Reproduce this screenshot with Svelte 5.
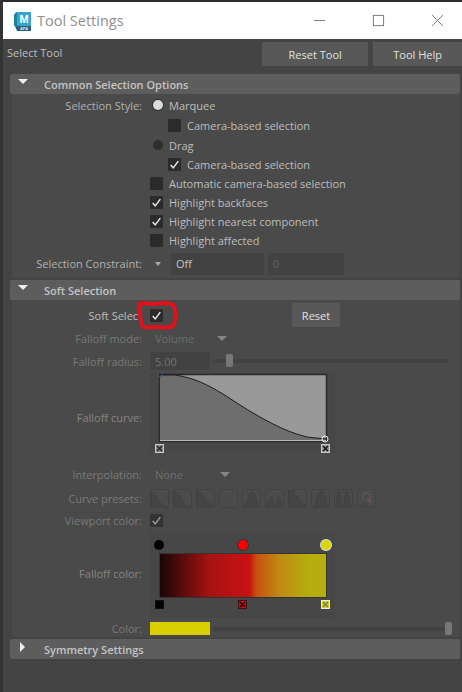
<script>
    const presets = [
        'M1 2 C6 2 8 17 18 18 L18 19 L1 19 Z',
        'M1 2 C10 2 7 18 18 18 L18 19 L1 19 Z',
        'M1 1 L18 18 L18 19 L1 19 Z',
        '',
        'M1 18 C5 18 6 3 10 3 C14 3 15 18 18 18 L18 19 L1 19 Z',
        'M1 18 C3 18 4 8 6 8 C8 8 8 18 10 18 C11 18 12 8 14 8 C16 8 16 18 18 18 L18 19 L1 19 Z',
        'M1 2 L6 2 L6 7 L10 7 L10 11 L13 11 L13 15 L18 15 L18 19 L1 19 Z',
        'M2 19 C5 18 6 2 10 2 C14 2 15 18 18 19 Z',
        'M1 19 C3 18 3 2 5 2 C7 2 7 18 9 18 C11 18 11 2 13 2 C15 2 15 18 18 19 Z',
    ];

    const options = [
        { label: 'Automatic camera-based selection', checked: false },
        { label: 'Highlight backfaces', checked: true },
        { label: 'Highlight nearest component', checked: true },
        { label: 'Highlight affected', checked: false },
    ];
</script>

{#snippet tick()}
    <svg class="tick" viewBox="0 0 13 13"><path d="M2 7 L5 10.5 L11 2.5" /></svg>
{/snippet}

{#snippet check(on)}
    <span class="check">{#if on}{@render tick()}{/if}</span>
{/snippet}

{#snippet handle(bg, border, mark)}
    <svg class="handle" viewBox="0 0 9 9">
        <rect x="0.5" y="0.5" width="8" height="8" fill={bg} stroke={border} />
        {#if mark}<path d="M2 2 L7 7 M7 2 L2 7" stroke={mark} stroke-width="1.5" />{/if}
    </svg>
{/snippet}

<div class="window">
    <header class="titlebar">
        <svg class="logo" viewBox="0 0 20 20">
            <path d="M2 4 L4 1 L19 1 L19 15 L2 15 Z" fill="#37a5cc" />
            <path d="M2 4 L5 1 L5 15 L2 15 Z" fill="#1f7fa8" />
            <path d="M3 15 L19 15 L19 20 L5 20 Z" fill="#2b5f7e" />
            <text x="12" y="12" class="logo-m">M</text>
            <text x="12" y="19" class="logo-sub">APA</text>
        </svg>
        <span class="title">Tool Settings</span>
        <div class="controls">
            <svg viewBox="0 0 14 14"><path d="M1 7 H13" /></svg>
            <svg viewBox="0 0 14 14"><rect x="1.5" y="1.5" width="11" height="11" /></svg>
            <svg viewBox="0 0 14 14"><path d="M1 1 L13 13 M13 1 L1 13" /></svg>
        </div>
    </header>

    <div class="toolbar">
        <span class="tool-name">Select Tool</span>
        <button class="btn wide">Reset Tool</button>
        <button class="btn help">Tool Help</button>
    </div>

    <section>
        <h2><span class="arrow down"></span>Common Selection Options</h2>
        <div class="body common">
            <div class="row spaced">
                <label>Selection Style:</label>
                <span class="radio on"></span><span class="text">Marquee</span>
            </div>
            <div class="row spaced">
                <label></label>
                <span class="indent"></span>{@render check(false)}<span class="text">Camera-based selection</span>
            </div>
            <div class="row">
                <label></label>
                <span class="radio"></span><span class="text">Drag</span>
            </div>
            <div class="row">
                <label></label>
                <span class="indent"></span>{@render check(true)}<span class="text">Camera-based selection</span>
            </div>
            {#each options as opt}
                <div class="row">
                    <label></label>
                    {@render check(opt.checked)}<span class="text">{opt.label}</span>
                </div>
            {/each}
            <div class="row constraint">
                <label>Selection Constraint:</label>
                <span class="mini-arrow"></span>
                <span class="field off">Off</span>
                <span class="field zero">0</span>
            </div>
        </div>
    </section>

    <section>
        <h2><span class="arrow down"></span>Soft Selection</h2>
        <div class="body soft">
            <div class="row top">
                <label class="bright">Soft Select</label>
                {@render check(true)}
                <button class="btn reset">Reset</button>
            </div>
            <div class="row off-row mode">
                <label>Falloff mode:</label>
                <span class="select">Volume</span>
                <span class="select-arrow"></span>
            </div>
            <div class="row off-row radius">
                <label>Falloff radius:</label>
                <span class="field num">5.00</span>
                <span class="slider"><span class="thumb first"></span></span>
            </div>
            <div class="row curve-row">
                <label>Falloff curve:</label>
                <div class="pad">
                    <svg class="curve" viewBox="0 0 185 71">
                        <rect x="9.5" y="1.5" width="167" height="67" fill="#999" stroke="#2a2a2a" stroke-width="1.5" />
                        <path d="M10 2 L25 2 C45 5 58 12 73 21 C90 32 105 42 123 51 C135 57 145 61 157 64 L176 66 L176 67 L10 67 Z" fill="#6e6e6e" />
                        <path d="M10 2 L25 2 C45 5 58 12 73 21 C90 32 105 42 123 51 C135 57 145 61 157 64 L176 66" fill="none" stroke="#1d1d1d" />
                        <path d="M10 67.5 H176" stroke="#b8b8b8" />
                        <circle cx="10" cy="1.5" r="2.5" fill="none" stroke="#34608a" />
                        <circle cx="175" cy="66" r="3" fill="none" stroke="#eee" />
                    </svg>
                    <div class="handles">
                        {@render handle('#8a8a8a', '#c8c8c8', '#222')}
                        {@render handle('#999', '#c8c8c8', '#111')}
                    </div>
                </div>
            </div>
            <div class="row off-row interp">
                <label>Interpolation:</label>
                <span class="select">None</span>
                <span class="select-arrow"></span>
            </div>
            <div class="row off-row presets-row">
                <label>Curve presets:</label>
                <div class="presets">
                    {#each presets as d}
                        <svg class="preset" viewBox="0 0 19 19">
                            <rect x="0.5" y="0.5" width="18" height="18" rx="2" fill="#4b4b4b" stroke="#424242" />
                            {#if d}<path {d} fill="#454545" stroke="#3e3e3e" stroke-width="0.6" />{/if}
                        </svg>
                    {/each}
                    <svg class="preset" viewBox="0 0 19 19">
                        <rect x="0.5" y="0.5" width="18" height="18" rx="2" fill="#4b4b4b" stroke="#424242" />
                        <path d="M2 19 L8 11 L11 19 Z" fill="#454545" />
                        <circle cx="9.5" cy="8" r="4" fill="none" stroke="#5c5c5c" />
                        <path d="M10 9 L15 12 L13 13 L14 17 Z" fill="#8a4a4a" />
                    </svg>
                </div>
            </div>
            <div class="row off-row viewport">
                <label>Viewport color:</label>
                <span class="check dim">{@render tick()}</span>
            </div>
            <div class="row color-row">
                <label>Falloff color:</label>
                <div class="pad color-pad">
                    <div class="dots">
                        <span class="dot black"></span>
                        <span class="dot red"></span>
                        <span class="dot yellow"></span>
                    </div>
                    <div class="ramp"></div>
                    <div class="handles">
                        {@render handle('#000', '#111', null)}
                        {@render handle('#e00000', '#3a1010', '#111')}
                        {@render handle('#d8d800', '#eee', '#777')}
                    </div>
                </div>
            </div>
            <div class="row off-row last">
                <label>Color:</label>
                <span class="swatch"></span>
                <span class="slider"><span class="thumb end"></span></span>
            </div>
        </div>
    </section>

    <section>
        <h2><span class="arrow right"></span>Symmetry Settings</h2>
    </section>

    <svg class="scribble" viewBox="0 0 42 32">
        <path d="M3 4 C9 2 11 4 18 4 C26 3 36 2 38 6 C40 11 39 20 38 25 C36 29 28 27 20 27 C14 27 7 29 6 25 C4 21 4 11 3 4 Z" />
    </svg>
</div>

<style>
    :global(body) {
        background: #444;
    }
    .window {
        position: relative;
        width: 462px;
        height: 692px;
        overflow: hidden;
        box-sizing: border-box;
        padding: 2px 0 0 3px;
        background: #444;
        box-shadow: inset 3px 0 0 #333, inset 0 2px 0 #2e2e2e;
        font-family: "Open Sans", "Liberation Sans", sans-serif;
        font-size: 11px;
        color: #bdbdbd;
    }
    .titlebar {
        display: flex;
        align-items: center;
        height: 37px;
        background: #fff;
    }
    .logo {
        width: 20px;
        height: 20px;
        margin-left: 9px;
    }
    .logo-m {
        font: bold 11px "Liberation Sans", sans-serif;
        fill: #fff;
        text-anchor: middle;
    }
    .logo-sub {
        font: bold 4px "Liberation Sans", sans-serif;
        fill: #dfe9ee;
        text-anchor: middle;
    }
    .title {
        margin-left: 5px;
        font-size: 14.5px;
        color: #8f8f8f;
    }
    .controls {
        display: flex;
        align-items: center;
        gap: 46px;
        margin-left: auto;
        margin-right: 18px;
    }
    .controls svg {
        width: 13px;
        height: 13px;
        fill: none;
        stroke: #777;
        stroke-width: 1;
    }
    .toolbar {
        display: flex;
        align-items: flex-start;
        height: 33px;
        padding-top: 3px;
        box-sizing: border-box;
    }
    .tool-name {
        width: 259px;
        padding-left: 4px;
        margin-top: 3px;
        font-size: 11px;
    }
    .btn {
        height: 24px;
        padding: 0;
        border: 0;
        background: #585858;
        color: #e0e0e0;
        font: inherit;
        font-size: 11px;
    }
    .wide {
        width: 108px;
    }
    .help {
        width: 90px;
        margin-left: 5px;
    }
    section {
        margin-left: 7px;
        width: 450px;
        margin-top: 2px;
    }
    h2 {
        display: flex;
        align-items: center;
        height: 20px;
        margin: 0;
        padding-left: 34px;
        position: relative;
        background: #5d5d5d;
        border-radius: 2px;
        font-size: 11px;
        font-weight: 600;
        color: #c4c4c4;
    }
    .arrow {
        position: absolute;
        width: 0;
        height: 0;
    }
    .arrow.down {
        left: 8px;
        top: 5px;
        border-left: 5px solid transparent;
        border-right: 5px solid transparent;
        border-top: 5px solid #eee;
    }
    .arrow.right {
        left: 10px;
        top: 3px;
        border-top: 5px solid transparent;
        border-bottom: 5px solid transparent;
        border-left: 5px solid #eee;
    }
    .body {
        margin-left: 2px;
        background: #4a4a4a;
    }
    .common {
        padding-top: 2px;
        height: 184px;
        box-sizing: border-box;
    }
    .soft {
        height: 337px;
        box-sizing: border-box;
    }
    .row {
        display: flex;
        align-items: center;
        height: 19px;
    }
    .spaced {
        margin-bottom: 1px;
    }
    label {
        flex: none;
        width: 130px;
        margin-right: 8px;
        text-align: right;
        color: #b0b0b0;
        white-space: nowrap;
    }
    .text {
        margin-left: 6px;
        color: #bdbdbd;
    }
    .indent {
        width: 18px;
    }
    .radio {
        width: 10px;
        height: 10px;
        margin: 0 3px 2px;
        border-radius: 50%;
        background: #2f2f2f;
    }
    .radio.on {
        background: #dcdcdc;
        box-shadow: 0 0 0 1px #333;
    }
    .radio + .text {
        margin-left: 3px;
    }
    .check {
        display: flex;
        align-items: center;
        justify-content: center;
        flex: none;
        width: 13px;
        height: 13px;
        border-radius: 1px;
        background: #2b2b2b;
    }
    .check.dim {
        background: #333;
    }
    .tick {
        width: 11px;
        height: 11px;
        fill: none;
        stroke: #e6e6e6;
        stroke-width: 1.8;
    }
    .dim .tick {
        stroke: #999;
    }
    .constraint {
        margin-top: 4px;
    }
    .mini-arrow {
        width: 0;
        height: 0;
        margin: 0 10px 0 5px;
        border-left: 3.5px solid transparent;
        border-right: 3.5px solid transparent;
        border-top: 4px solid #aaa;
    }
    .field {
        display: flex;
        align-items: center;
        height: 22px;
        box-sizing: border-box;
        padding-left: 5px;
        background: #424242;
    }
    .off {
        width: 93px;
        color: #c4c4c4;
    }
    .zero {
        width: 76px;
        margin-left: 4px;
        color: #666;
    }
    .top {
        height: 30px;
    }
    .bright {
        color: #bdbdbd;
        overflow: hidden;
    }
    .reset {
        width: 48px;
        height: 24px;
        margin-left: 129px;
    }
    .off-row label {
        color: #787878;
    }
    .select {
        width: 59px;
        padding-left: 5px;
        color: #6e6e6e;
    }
    .select-arrow {
        width: 0;
        height: 0;
        margin-left: 3px;
        border-left: 5px solid transparent;
        border-right: 5px solid transparent;
        border-top: 5px solid #858585;
    }
    .mode {
        height: 17px;
    }
    .radius {
        height: 24px;
        margin-top: 2px;
    }
    .num {
        width: 60px;
        height: 18px;
        color: #727272;
        border-radius: 2px;
    }
    .slider {
        position: relative;
        flex: none;
        width: 236px;
        height: 4px;
        margin-left: 3px;
        background: #424242;
        border-radius: 2px;
    }
    .thumb {
        position: absolute;
        top: -5px;
        width: 7px;
        height: 13px;
        border-radius: 2px;
        background: #777;
    }
    .thumb.first {
        left: 13px;
    }
    .thumb.end {
        right: -3px;
    }
    .curve-row {
        height: 90px;
        align-items: flex-start;
    }
    .curve-row label {
        margin-top: 37px;
        color: #858585;
    }
    .pad {
        width: 185px;
        background: #474747;
    }
    .curve {
        display: block;
        width: 185px;
        height: 71px;
    }
    .handles {
        display: flex;
        justify-content: space-between;
        padding: 0 5px;
    }
    .handle {
        width: 9px;
        height: 9px;
        display: block;
    }
    .interp {
        height: 23px;
    }
    .interp .select-arrow {
        margin-left: 6px;
    }
    .presets-row {
        height: 24px;
    }
    .presets {
        display: flex;
        gap: 4px;
    }
    .preset {
        width: 19px;
        height: 19px;
        display: block;
    }
    .viewport {
        height: 19px;
        margin-top: 2px;
        padding-bottom: 4px;
        border-top: 1px solid #474747;
        box-sizing: border-box;
    }
    .color-row {
        height: 87px;
        align-items: flex-start;
    }
    .color-row label {
        margin-top: 35px;
        color: #858585;
    }
    .color-pad {
        height: 87px;
        padding-top: 9px;
        box-sizing: border-box;
    }
    .dots {
        display: flex;
        justify-content: space-between;
        padding: 0 4px;
    }
    .dot {
        width: 10px;
        height: 10px;
        border-radius: 50%;
    }
    .dot.black {
        background: #000;
    }
    .dot.red {
        background: #f00;
        box-shadow: 0 0 0 1px #333;
    }
    .dot.yellow {
        background: #d8d800;
        box-shadow: 0 0 0 1px #ddd;
    }
    .ramp {
        width: 166px;
        height: 43px;
        margin: 3px 0 2px 9px;
        border: 1px solid #333;
        background: linear-gradient(to right, #1a0606 0%, #a81212 30%, #c81212 54%, #c6500f 58%, #c08a14 72%, #b5ae0e 90%, #b5ae0e 100%);
    }
    .last {
        height: 17px;
        margin-top: 2px;
    }
    .swatch {
        flex: none;
        width: 60px;
        height: 13px;
        background: #d8d000;
    }
    .scribble {
        position: absolute;
        left: 136px;
        top: 300px;
        width: 42px;
        height: 32px;
        fill: none;
        stroke: #e0101c;
        stroke-width: 4;
    }
</style>
